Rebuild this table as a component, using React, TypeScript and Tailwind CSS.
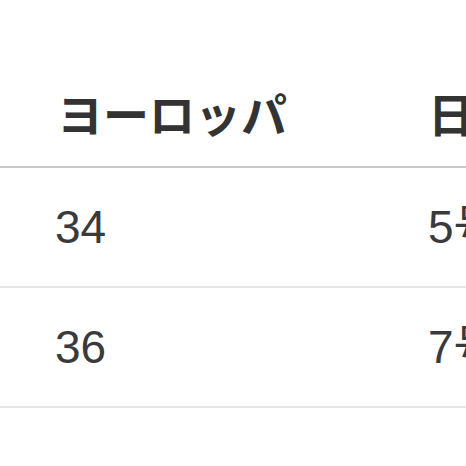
import React from 'react';

const rows = [
  { eu: '34', jp: '5号' },
  { eu: '36', jp: '7号' },
];

export default function App() {
  return (
    <div className="w-[466px] h-[466px] overflow-hidden bg-white">
      <div
        className="w-[700px] pt-[65px] text-[46px] leading-none text-[#3a3a3a]"
        style={{ fontFamily: '"Liberation Sans", "Noto Sans CJK JP", sans-serif' }}
      >
        {/* Header */}
        <div className="grid grid-cols-[428px_1fr] h-[103px] items-center border-b-2 border-[#c9c9c9] font-bold text-[#333]">
          <div className="pl-[57px]">ヨーロッパ</div>
          <div>日本</div>
        </div>

        {rows.map((r) => (
          <div
            key={r.eu}
            className="grid grid-cols-[428px_1fr] h-[120px] items-center border-b-2 border-[#e6e6e6]"
          >
            <div className="pl-[55px]">{r.eu}</div>
            <div>{r.jp}</div>
          </div>
        ))}
      </div>
    </div>
  );
}
